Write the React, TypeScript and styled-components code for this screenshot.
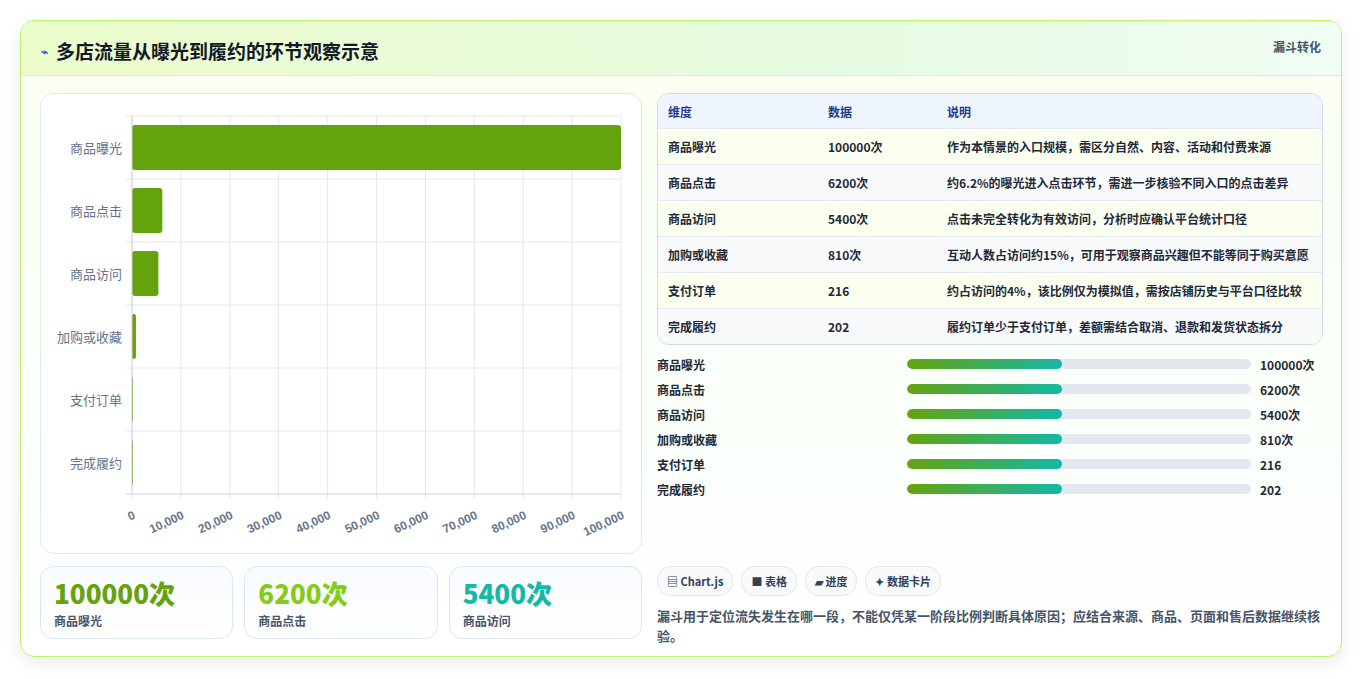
import React from "react";
import styled, { createGlobalStyle } from "styled-components";

const G = createGlobalStyle`
  body{margin:0;background:#f3f4f6;font-family:"Noto Sans CJK SC","Noto Sans",sans-serif;}
`;
const Page = styled.div`padding:20px 21px 22px 20px;height:679px;box-sizing:border-box;background:#fff;`;
const Card = styled.div`border:1px solid #bef264;border-radius:14px;background:linear-gradient(180deg,#fbfff1,#fafffa 60%,#fff);box-shadow:0 6px 18px rgba(0,0,0,.08);overflow:hidden;height:637px;box-sizing:border-box;`;
const Head = styled.div`height:55px;display:flex;align-items:flex-start;justify-content:space-between;padding:0 20px;background:linear-gradient(90deg,#ecfccb,#e6fbe0 60%,#f0fdf4);border-bottom:1px solid #e2ead8;box-sizing:border-box;`;
const Title = styled.h1`margin:16px 0 0;font-size:19px;font-weight:700;color:#111827;display:flex;align-items:center;gap:8px;`;
const Bolt = styled.span`color:#2563eb;font-size:12px;`;
const Tag = styled.span`margin-top:17px;font-size:12px;font-weight:700;color:#475569;`;
const Body = styled.div`display:grid;grid-template-columns:602px 666px;gap:15px;padding:17px 19px 0;`;
const Col = styled.div`display:flex;flex-direction:column;`;
const ChartBox = styled.div`height:461px;border:1px solid #e2e8f0;border-radius:14px;background:#fff;box-sizing:border-box;`;
const Stats = styled.div`display:grid;grid-template-columns:repeat(3,1fr);gap:11px;margin-top:12px;`;
const Stat = styled.div`height:73px;border:1px solid #dbe7f5;border-radius:13px;background:linear-gradient(180deg,#f8fbff,#fff);padding:10px 13px;box-sizing:border-box;`;
const Big = styled.div<{c:string}>`font-size:26px;font-weight:800;color:${p=>p.c};line-height:32px;`;
const Small = styled.div`font-size:12px;font-weight:600;color:#475569;margin-top:3px;`;
const Table = styled.div`border:1px solid #d1dbe8;border-radius:12px;overflow:hidden;`;
const Row = styled.div<{bg:string;h:number}>`display:grid;grid-template-columns:160px 119px 1fr;height:${p=>p.h}px;align-items:center;padding-left:10px;background:${p=>p.bg};border-top:1px solid #e5eaf0;font-size:12px;font-weight:600;color:#1f2937;&:first-child{border-top:0;}`;
const HeadRow = styled(Row)`color:#1e3a8a;`;
const Bars = styled.div`display:flex;flex-direction:column;gap:7px;margin-top:10px;`;
const BarRow = styled.div`display:grid;grid-template-columns:250px 344px 1fr;gap:0;align-items:center;height:18px;font-size:12px;font-weight:700;color:#1f2937;`;
const Track = styled.div`height:10px;border-radius:6px;background:#e2e8f0;overflow:hidden;`;
const Fill = styled.div`height:100%;border-radius:6px;background:linear-gradient(90deg,#65a30d,#14b8a6);`;
const Val = styled.span`padding-left:9px;`;
const Chips = styled.div`display:flex;gap:8px;margin-top:68px;`;
const Chip = styled.span`height:28px;padding:0 9px;border:1px solid #e2e8f0;border-radius:14px;background:#f8fafc;display:flex;align-items:center;font-size:11px;font-weight:700;color:#334155;gap:3px;`;
const Note = styled.p`margin:10px 0 0;font-size:13px;font-weight:600;color:#475569;line-height:20px;`;

const rows = [
  ["商品曝光","100000次","作为本情景的入口规模，需区分自然、内容、活动和付费来源",100000],
  ["商品点击","6200次","约6.2%的曝光进入点击环节，需进一步核验不同入口的点击差异",6200],
  ["商品访问","5400次","点击未完全转化为有效访问，分析时应确认平台统计口径",5400],
  ["加购或收藏","810次","互动人数占访问约15%，可用于观察商品兴趣但不能等同于购买意愿",810],
  ["支付订单","216","约占访问的4%，该比例仅为模拟值，需按店铺历史与平台口径比较",216],
  ["完成履约","202","履约订单少于支付订单，差额需结合取消、退款和发货状态拆分",202],
] as const;

function Chart(){
  const x0=91,x1=580,y0=22,rh=63;
  const ticks=Array.from({length:11},(_,i)=>i*10000);
  return (
    <svg width="600" height="459" style={{display:"block"}}>
      {ticks.map((t,i)=>{const x=x0+(x1-x0)*i/10;return <g key={i}>
        <line x1={x} y1={y0} x2={x} y2={y0+rh*6+5} stroke="#e5e7eb"/>
        <text x={x+4} y={y0+rh*6+24} fontSize="12" fontWeight="700" fill="#64748b" textAnchor="end" transform={`rotate(-25 ${x+4} ${y0+rh*6+24})`} fontFamily="Liberation Sans,sans-serif">{t.toLocaleString("en-US")}</text>
      </g>})}
      {rows.map((r,i)=>{const y=y0+rh*i;return <g key={i}>
        <line x1={x0-6} y1={y} x2={x1} y2={y} stroke="#e5e7eb"/>
        <text x={x0-10} y={y+rh/2+5} fontSize="13" fill="#64748b" textAnchor="end">{r[0]}</text>
        <rect x={x0} y={y+9} width={Math.max(1,(x1-x0)*(r[3] as number)/100000)} height={45} rx="3" fill="#65a30d"/>
      </g>})}
      <line x1={x0-6} y1={y0+rh*6} x2={x1} y2={y0+rh*6} stroke="#cbd5e1"/>
      <line x1={x0} y1={y0} x2={x0} y2={y0+rh*6} stroke="#cbd5e1"/>
    </svg>
  );
}

export default function App(){
  return (<><G/><Page><Card>
    <Head><Title><Bolt>⌁</Bolt>多店流量从曝光到履约的环节观察示意</Title><Tag>漏斗转化</Tag></Head>
    <Body>
      <Col>
        <ChartBox><Chart/></ChartBox>
        <Stats>
          <Stat><Big c="#65a30d">100000次</Big><Small>商品曝光</Small></Stat>
          <Stat><Big c="#84cc16">6200次</Big><Small>商品点击</Small></Stat>
          <Stat><Big c="#14b8a6">5400次</Big><Small>商品访问</Small></Stat>
        </Stats>
      </Col>
      <Col>
        <Table>
          <HeadRow bg="#eef5ff" h={34}><span>维度</span><span>数据</span><span>说明</span></HeadRow>
          {rows.map((r,i)=><Row key={i} bg={i%2?"#f8fafc":"#fafff0"} h={35}><span>{r[0]}</span><span>{r[1]}</span><span>{r[2]}</span></Row>)}
        </Table>
        <Bars>{rows.map((r,i)=><BarRow key={i}><span>{r[0]}</span><Track><Fill style={{width:"45%"}}/></Track><Val>{r[1]}</Val></BarRow>)}</Bars>
        <Chips><Chip>▤ Chart.js</Chip><Chip>■ 表格</Chip><Chip>▰ 进度</Chip><Chip>✦ 数据卡片</Chip></Chips>
        <Note>漏斗用于定位流失发生在哪一段，不能仅凭某一阶段比例判断具体原因；应结合来源、商品、页面和售后数据继续核验。</Note>
      </Col>
    </Body>
  </Card></Page></>);
}
